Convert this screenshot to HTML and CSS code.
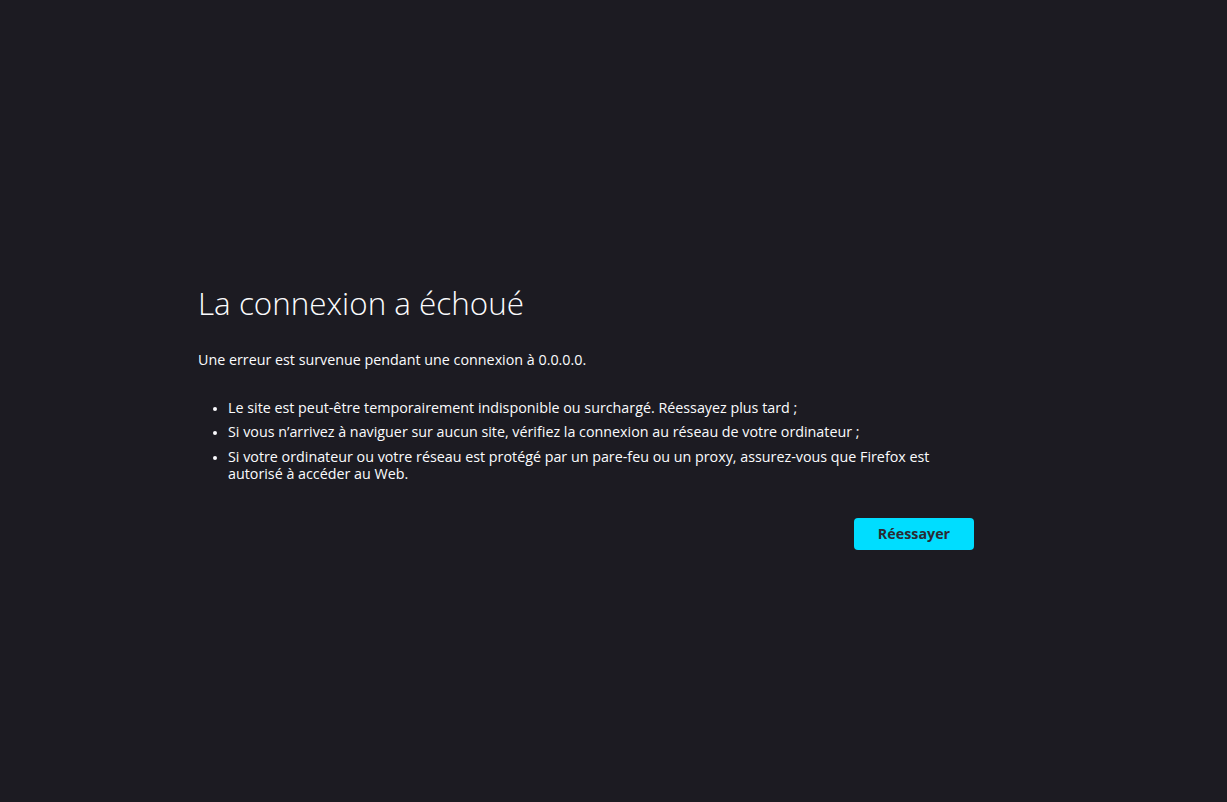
FILE: index.html
```html
<!DOCTYPE html>
<html lang="fr">
<head>
<meta charset="utf-8">
<title>Problème de chargement de la page</title>
<link rel="stylesheet" href="styles.css">
</head>
<body>
<main class="container">
  <h1 class="title">La connexion a échoué</h1>
  <p class="intro">Une erreur est survenue pendant une connexion à 0.0.0.0.</p>
  <ul class="reasons">
    <li>Le site est peut-être temporairement indisponible ou surchargé. Réessayez plus tard ;</li>
    <li>Si vous n’arrivez à naviguer sur aucun site, vérifiez la connexion au réseau de votre ordinateur ;</li>
    <li>Si votre ordinateur ou votre réseau est protégé par un pare-feu ou un proxy, assurez-vous que Firefox est autorisé à accéder au Web.</li>
  </ul>
  <div class="actions">
    <button class="retry" type="button">Réessayer</button>
  </div>
</main>
</body>
</html>
```

FILE: styles.css
```css
html, body {
  margin: 0;
  height: 100%;
}
body {
  background: #1c1b22;
  color: #fbfbfe;
  font-family: "Open Sans", "Noto Sans", sans-serif;
  font-size: 14.3px;
  display: flex;
  align-items: center;
  justify-content: center;
  padding: 30px 55px 0 0;
  box-sizing: border-box;
}
.container {
  width: 776px;
}
.title {
  margin: 0 0 28px;
  font-size: 31.4px;
  font-weight: 300;
  line-height: 40px;
}
.intro {
  margin: 0 0 30px;
  line-height: 18px;
}
.reasons {
  margin: 0;
  padding-left: 30px;
}
.reasons li {
  line-height: 17px;
  margin-bottom: 7.5px;
}
.reasons li::marker {
  font-size: 12px;
}
.reasons li:last-child {
  margin-bottom: 0;
}
.actions {
  display: flex;
  justify-content: flex-end;
  margin-top: 36px;
}
.retry {
  width: 120px;
  height: 32px;
  border: none;
  border-radius: 4px;
  background: #00ddff;
  color: #2b2a33;
  font-family: inherit;
  font-size: 14.3px;
  font-weight: 700;
}
```
